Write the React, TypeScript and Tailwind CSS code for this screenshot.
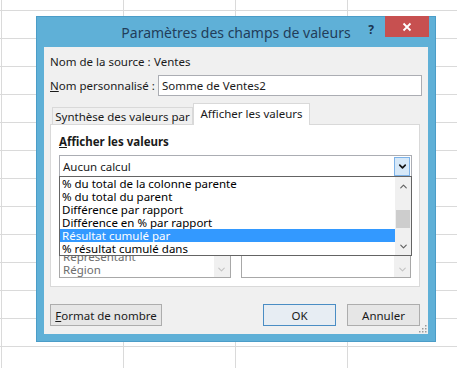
import { ChevronDown, ChevronUp } from "lucide-react"

const FONT = "font-['Noto_Sans','Open_Sans',sans-serif]"

const dropdownItems = [
  "% du total de la colonne parente",
  "% du total du parent",
  "Différence par rapport",
  "Différence en % par rapport",
  "Résultat cumulé par",
  "% résultat cumulé dans",
]

function SheetGrid() {
  const cells = Array.from({ length: 5 * 14 })
  return (
    <div className="grid h-[368px] w-[457px] grid-cols-[1px_121px_111px_111px_1fr] grid-rows-[10px_repeat(13,27px)] gap-px bg-[#dadada]">
      {cells.map((_, i) => (
        <div key={i} className="bg-white" />
      ))}
    </div>
  )
}

function Btn({ children, primary, className }: { children: React.ReactNode; primary?: boolean; className?: string }) {
  return (
    <button
      type="button"
      className={`flex h-[22px] items-center justify-center border text-[11.5px] text-[#1a1a1a] ${
        primary ? "border-[#4a8dc4] bg-[#e7edf3]" : "border-[#adadad] bg-[#e6e6e6]"
      } ${className ?? ""}`}
    >
      {children}
    </button>
  )
}

export default function App() {
  return (
    <div className={`relative h-[368px] w-[457px] overflow-hidden whitespace-nowrap bg-white ${FONT}`}>
      <SheetGrid />

      {/* dialog window */}
      <div className="absolute left-[36px] top-[16px] flex h-[326px] w-[400px] flex-col border border-[#4b9dc8] bg-[#5fb0d7] px-[7px] pb-[7px]">
        <div className="relative flex h-[30px] shrink-0 items-center justify-center">
          <span className="text-[14px] text-[#223d5a]">Paramètres des champs de valeurs</span>
          <span className="absolute right-[54px] top-[4px] text-[12px] font-bold text-[#1b3450]">?</span>
          <div className="absolute -right-[1px] -top-[1px] flex h-[21px] w-[44px] items-center justify-center bg-[#c75050]">
            <svg width="10" height="10" viewBox="0 0 10 10">
              <path d="M1.5 1.5 L8.5 8.5 M8.5 1.5 L1.5 8.5" stroke="white" strokeWidth="1.8" />
            </svg>
          </div>
        </div>

        <div className="relative flex flex-1 flex-col bg-[#f0f0f0] px-[6px] pt-[4px] text-[11.5px] leading-[13px] text-[#1a1a1a]">
          <div className="flex h-[20px] items-center">
            <span className="w-[104px] shrink-0">Nom de la source :</span>
            <span>Ventes</span>
          </div>
          <div className="mt-[4px] flex h-[21px] items-center">
            <span className="w-[108px] shrink-0">
              <u>N</u>om personnalisé :
            </span>
            <div className="flex h-[21px] w-[264px] items-center border border-[#abadb3] bg-white px-[3px]">
              Somme de Ventes2
            </div>
          </div>

          {/* tabs */}
          <div className="mt-[7px] flex items-end pl-[2px]">
            <div className="flex h-[17px] w-[141px] items-center justify-center border border-b-0 border-[#d9d9d9] bg-[#f0f0f0]">
              Synthèse des valeurs par
            </div>
            <div className="relative z-10 -mb-px flex h-[22px] w-[117px] items-center justify-center border border-b-0 border-[#d9d9d9] bg-white pb-[2px]">
              Afficher les valeurs
            </div>
          </div>

          <div className="relative flex h-[163px] w-[370px] flex-col border border-[#d9d9d9] bg-white px-[8px] pt-[9px]">
            <div className="flex h-[15px] items-center font-bold">
              <u>A</u>fficher les valeurs
            </div>
            <div className="mt-[6px] flex h-[22px] w-[353px] items-center justify-between border border-[#abadb3] bg-white pl-[3px] pr-px">
              <span>Aucun calcul</span>
              <div className="flex h-[19px] w-[16px] items-center justify-center border border-[#7cb2e8] bg-[#d6e8f8]">
                <ChevronDown size={11} strokeWidth={3.5} className="text-[#111]" />
              </div>
            </div>

            <div className="mt-[29px] flex gap-[10px]">
              <div className="flex h-[72px] w-[172px] justify-between overflow-hidden border border-[#a8a8a8] bg-white">
                <div className="flex flex-col justify-end pb-px pl-[3px] leading-[13px] text-[#6d6d6d]">
                  <span>Représentant</span>
                  <span>Région</span>
                </div>
                <div className="flex w-[16px] flex-col justify-end bg-[#f0f0f0] pb-[2px]">
                  <ChevronDown size={11} strokeWidth={2.5} className="mx-auto text-[#c4c4c4]" />
                </div>
              </div>
              <div className="flex h-[72px] w-[171px] justify-end overflow-hidden border border-[#a8a8a8] bg-white">
                <div className="flex w-[16px] flex-col justify-end bg-[#f0f0f0] pb-[2px]">
                  <ChevronDown size={11} strokeWidth={2.5} className="mx-auto text-[#c4c4c4]" />
                </div>
              </div>
            </div>

            {/* open dropdown list */}
            <div className="absolute left-[8px] top-[51px] z-20 flex h-[80px] w-[353px] border border-[#646464] bg-white">
              <div className="flex flex-1 flex-col leading-[13px] text-[#000]">
                {dropdownItems.map((item) => (
                  <div
                    key={item}
                    className={`h-[13px] pl-[2px] ${item === "Résultat cumulé par" ? "bg-[#3399ff] text-white" : ""}`}
                  >
                    {item}
                  </div>
                ))}
              </div>
              <div className="flex w-[16px] flex-col items-center bg-[#f0f0f0]">
                <ChevronUp size={11} strokeWidth={2.5} className="mt-[4px] text-[#606060]" />
                <div className="mt-[18px] h-[18px] w-[14px] bg-[#cdcdcd]" />
                <ChevronDown size={11} strokeWidth={2.5} className="mt-auto mb-[3px] text-[#606060]" />
              </div>
            </div>
          </div>

          <div className="mt-[17px] flex items-center">
            <Btn className="w-[112px]">
              <u>F</u>ormat de nombre
            </Btn>
            <div className="ml-auto mr-[2px] flex gap-[11px]">
              <Btn primary className="w-[73px]">
                OK
              </Btn>
              <Btn className="w-[73px]">Annuler</Btn>
            </div>
          </div>

          <svg className="absolute bottom-[1px] right-[1px]" width="9" height="9" viewBox="0 0 9 9">
            <g fill="#9a9a9a">
              <rect x="7" y="1" width="1.5" height="1.5" />
              <rect x="4" y="4" width="1.5" height="1.5" />
              <rect x="7" y="4" width="1.5" height="1.5" />
              <rect x="1" y="7" width="1.5" height="1.5" />
              <rect x="4" y="7" width="1.5" height="1.5" />
              <rect x="7" y="7" width="1.5" height="1.5" />
            </g>
          </svg>
        </div>
      </div>
    </div>
  )
}
